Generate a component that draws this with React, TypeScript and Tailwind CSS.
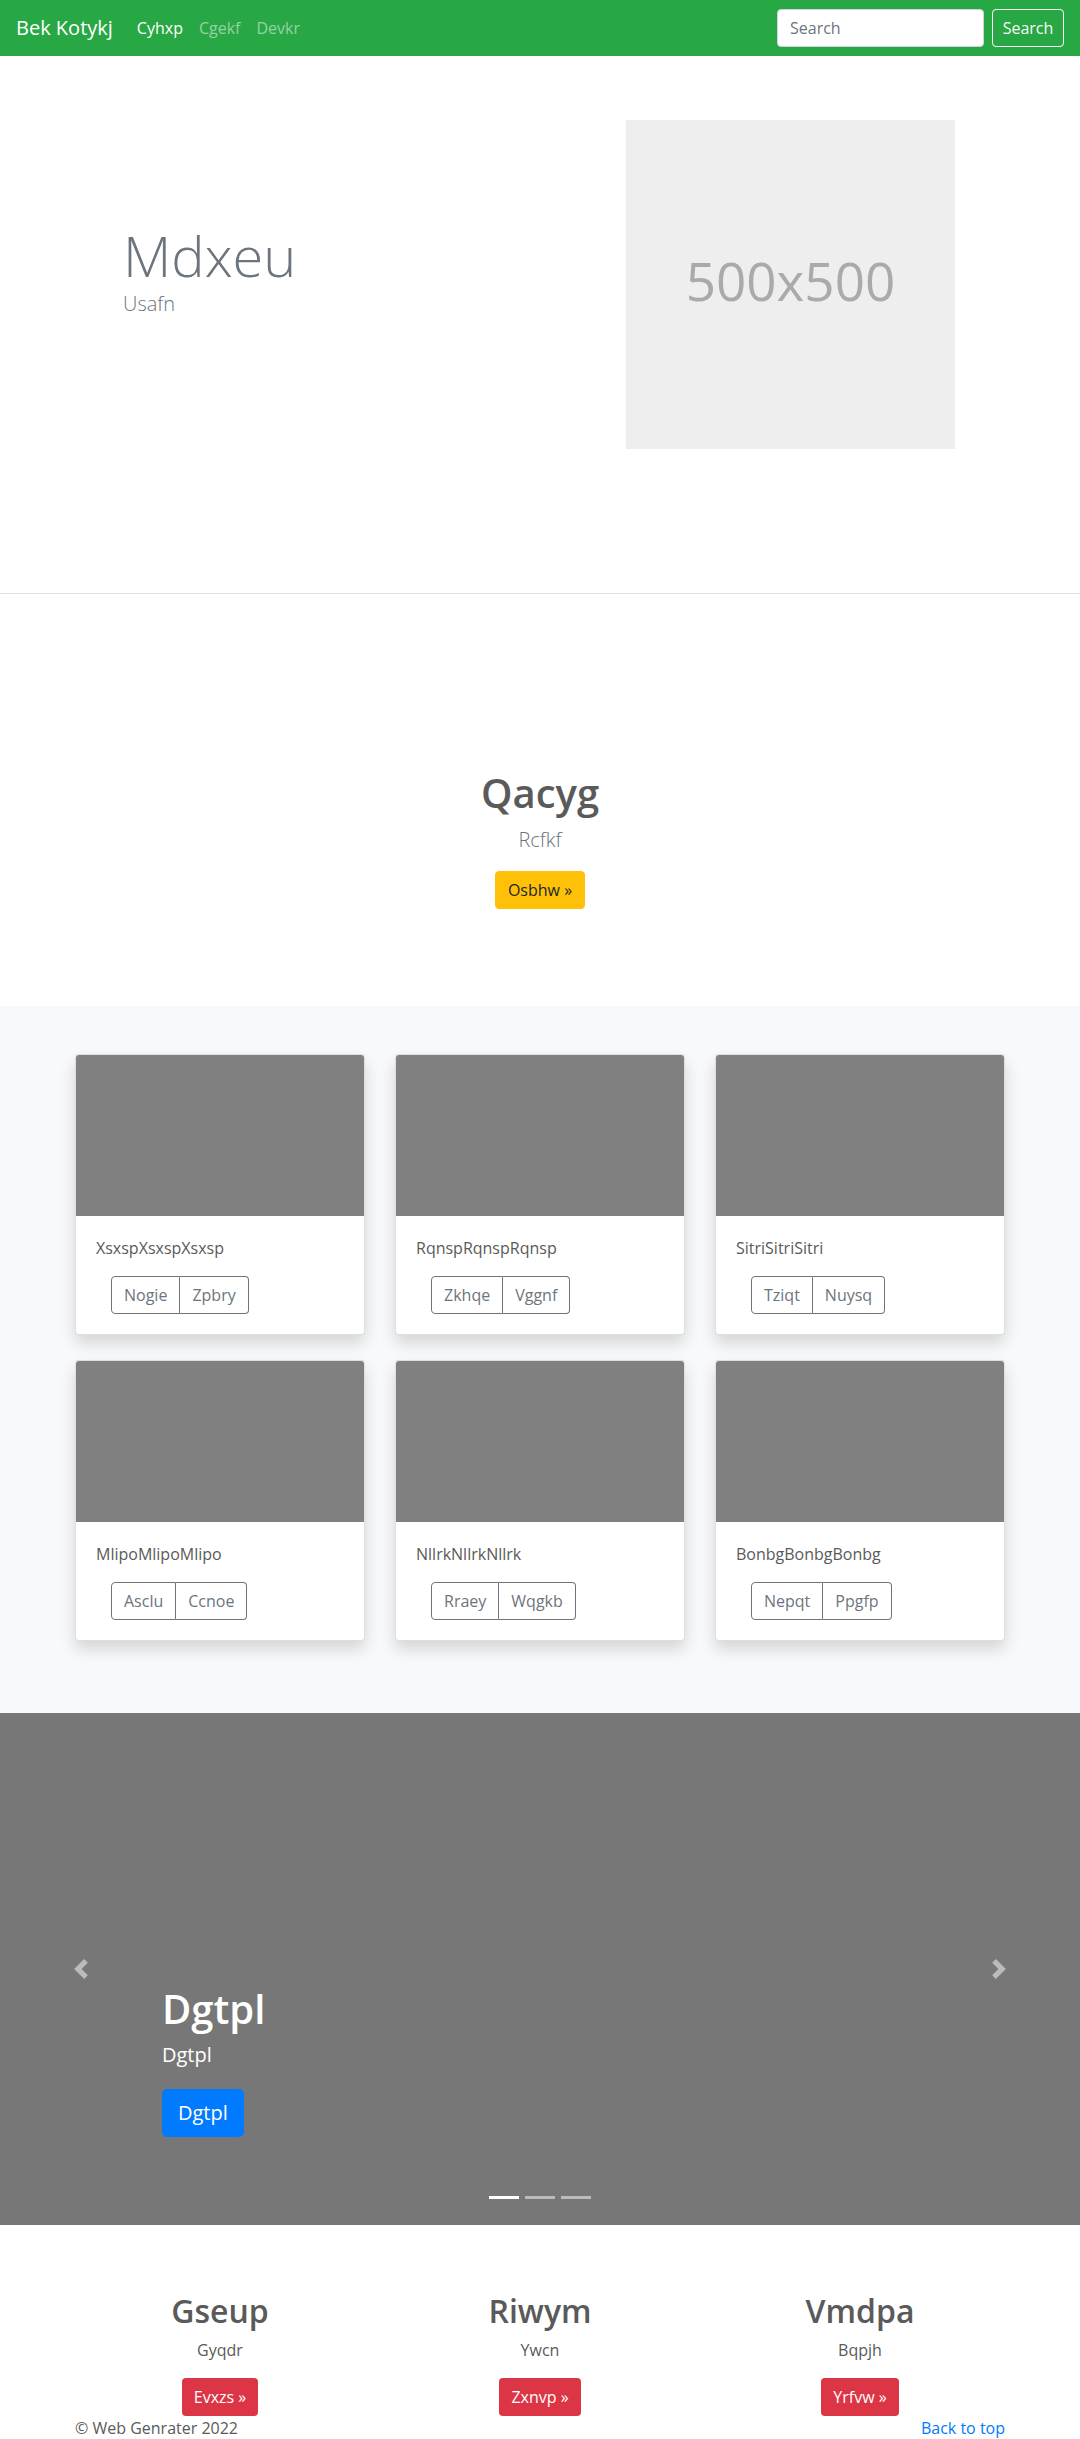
import React from "react";

const cards = [
  { title: "XsxspXsxspXsxsp", a: "Nogie", b: "Zpbry" },
  { title: "RqnspRqnspRqnsp", a: "Zkhqe", b: "Vggnf" },
  { title: "SitriSitriSitri", a: "Tziqt", b: "Nuysq" },
  { title: "MlipoMlipoMlipo", a: "Asclu", b: "Ccnoe" },
  { title: "NllrkNllrkNllrk", a: "Rraey", b: "Wqgkb" },
  { title: "BonbgBonbgBonbg", a: "Nepqt", b: "Ppgfp" },
];

const columns = [
  { title: "Gseup", text: "Gyqdr", btn: "Evxzs" },
  { title: "Riwym", text: "Ywcn", btn: "Zxnvp" },
  { title: "Vmdpa", text: "Bqpjh", btn: "Yrfvw" },
];

const Chevron = ({ dir }: { dir: "prev" | "next" }) => (
  <svg width="20" height="20" viewBox="0 0 8 8" fill="#fff" className="opacity-50">
    {dir === "prev" ? (
      <path d="M5.25 0l-4 4 4 4 1.5-1.5L4.25 4l2.5-2.5L5.25 0z" />
    ) : (
      <path d="M2.75 0l-1.5 1.5L3.75 4l-2.5 2.5L2.75 8l4-4-4-4z" />
    )}
  </svg>
);

const App = () => {
  return (
    <div className="w-[1080px] font-['Open_Sans',sans-serif] text-[#5a5a5a] bg-white">
      {/* navbar */}
      <nav className="h-14 bg-[#28a745] flex items-center px-4">
        <span className="text-white text-[20px] leading-[30px] mr-4">Bek Kotykj</span>
        <ul className="flex text-[16px]">
          <li className="px-2 text-white">Cyhxp</li>
          <li className="px-2 text-white/50">Cgekf</li>
          <li className="px-2 text-white/50">Devkr</li>
        </ul>
        <div className="ml-auto flex items-center">
          <input
            placeholder="Search"
            className="w-[207px] h-[38px] bg-white rounded border border-[#ced4da] px-3 text-[16px] placeholder:text-[#6c757d] outline-none"
          />
          <button className="ml-2 w-[72px] h-[38px] rounded border border-[#f8f9fa] text-[#f8f9fa] text-[16px]">
            Search
          </button>
        </div>
      </nav>

      {/* hero */}
      <section className="flex items-start pt-16 pb-[144px] border-b border-[#dee2e6]">
        <div className="w-[626px] pl-[123px] pt-[102px]">
          <h1 className="text-[56px] leading-[1.2] font-light text-[#6c757d]">Mdxeu</h1>
          <p className="text-[20px] leading-[30px] font-light text-[#6c757d]">Usafn</p>
        </div>
        <div className="w-[329px] h-[329px] bg-[#eeeeee] flex items-center justify-center pb-[8px]">
          <span className="text-[53px] text-[#aaaaaa]">500x500</span>
        </div>
      </section>

      {/* intro */}
      <section className="pt-[175px] pb-[97px] text-center">
        <h1 className="text-[40px] leading-[48px] font-semibold mb-2">Qacyg</h1>
        <p className="text-[20px] leading-[30px] font-light text-[#6c757d] mb-4">Rcfkf</p>
        <button className="h-[38px] px-3 rounded bg-[#ffc107] border border-[#ffc107] text-[#212529] text-[16px]">
          Osbhw »
        </button>
      </section>

      {/* album */}
      <section className="bg-[#f8f9fa] pt-12 pb-[72px]">
        <div className="w-[930px] mx-auto grid grid-cols-3 gap-x-[30px] gap-y-[25px]">
          {cards.map((c) => (
            <div
              key={c.title}
              className="bg-white border border-black/[0.125] rounded overflow-hidden shadow-[0_0.5rem_1rem_rgba(0,0,0,0.15)]"
            >
              <div className="h-[161px] bg-[#808080]" />
              <div className="p-5">
                <p className="text-[16px] leading-6 mb-4">{c.title}</p>
                <div className="ml-[15px] inline-flex text-[16px] text-[#6c757d]">
                  <span className="h-[38px] px-3 flex items-center border border-[#6c757d] rounded-l">
                    {c.a}
                  </span>
                  <span className="h-[38px] px-3 flex items-center border border-l-0 border-[#6c757d] rounded-r">
                    {c.b}
                  </span>
                </div>
              </div>
            </div>
          ))}
        </div>
      </section>

      {/* carousel */}
      <section className="relative h-[512px] bg-[#777777] flex">
        <div className="w-[15%] flex items-center justify-center">
          <Chevron dir="prev" />
        </div>
        <div className="flex-1 flex flex-col justify-end pb-[68px] text-white">
          <h1 className="text-[40px] leading-[48px] font-semibold mb-2">Dgtpl</h1>
          <p className="text-[20px] leading-[28px] mb-5">Dgtpl</p>
          <p className="mb-5">
            <button className="h-12 px-4 rounded-[4.8px] bg-[#007bff] text-white text-[20px]">Dgtpl</button>
          </p>
        </div>
        <div className="w-[15%] flex items-center justify-center">
          <Chevron dir="next" />
        </div>
        <div className="absolute bottom-[26px] left-0 right-0 flex justify-center gap-[6px]">
          <span className="w-[30px] h-[3px] bg-white" />
          <span className="w-[30px] h-[3px] bg-white/50" />
          <span className="w-[30px] h-[3px] bg-white/50" />
        </div>
      </section>

      {/* marketing */}
      <section className="w-[960px] mx-auto grid grid-cols-3 pt-[67px] text-center">
        {columns.map((c) => (
          <div key={c.title} className="px-[15px]">
            <h2 className="text-[32px] leading-[38px] font-semibold mb-2">{c.title}</h2>
            <p className="text-[16px] leading-6 mb-4">{c.text}</p>
            <button className="h-[38px] px-3 rounded bg-[#dc3545] text-white text-[16px]">{c.btn} »</button>
          </div>
        ))}
      </section>

      <footer className="w-[930px] mx-auto flex justify-between text-[16px] leading-6 pb-10">
        <p>© Web Genrater 2022</p>
        <a href="#" className="text-[#007bff]">Back to top</a>
      </footer>
    </div>
  );
};

export default App;
